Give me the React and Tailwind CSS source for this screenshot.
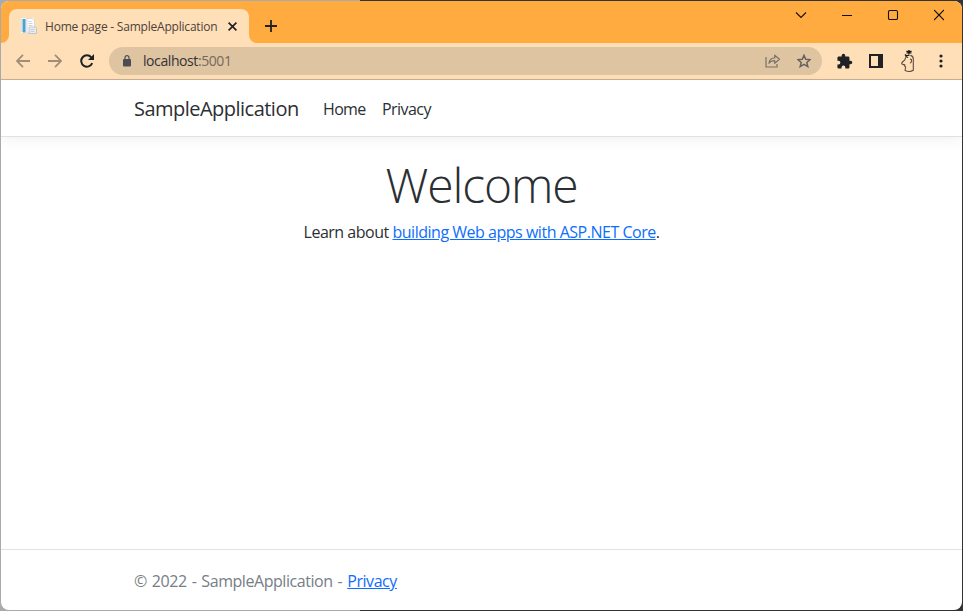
import React from "react";

function Tab() {
  return (
    <div className="relative mt-[8px] ml-[8px] flex h-[34px] w-[240px] items-center rounded-t-[8px] bg-[#ffdfb8] pl-3">
      <svg className="absolute bottom-0 -left-[8px]" width="8" height="8" viewBox="0 0 8 8" fill="#ffdfb8">
        <path d="M8 0V8H0A8 8 0 0 0 8 0Z" />
      </svg>
      <svg className="absolute -right-[8px] bottom-0" width="8" height="8" viewBox="0 0 8 8" fill="#ffdfb8">
        <path d="M0 0V8H8A8 8 0 0 1 0 0Z" />
      </svg>
      <svg width="16" height="16" viewBox="0 0 16 16" className="shrink-0">
        <rect x="0" y="0" width="13" height="15" fill="#f1f5f7" />
        <rect x="0.5" y="1" width="1.5" height="13" fill="#a5d3ec" />
        <rect x="2" y="1" width="2.5" height="13.5" fill="#4d9fce" />
        <path d="M6 .5h5l2.500 2.500V15H6z" fill="#fff" stroke="#c9d0d8" strokeWidth=".7" />
        <path d="M8 9h6.500l1 1.500V15.500H8z" fill="#e9edf1" stroke="#aeb8c2" strokeWidth=".7" />
        <path d="M7.500 3.500h3M7.500 5.500h4M7.500 7.500h4M9.500 11.500h4M9.500 13.500h4" stroke="#bcc6d0" strokeWidth=".8" />
      </svg>
      <span className="ml-2 w-[180px] pt-[2px] text-[12px] leading-4 tracking-[-0.21px] whitespace-nowrap text-[#4d4238]">
        Home page - SampleApplication
      </span>
      <svg className="absolute top-[13px] right-[12px]" width="9" height="9" viewBox="0 0 9 9" stroke="#202124" strokeWidth="1.7">
        <path d="M.6.6l7.800 7.800M8.400.6L.6 8.400" />
      </svg>
    </div>
  );
}

function TitleBar() {
  return (
    <div className="flex h-[42px] bg-[#ffab40]">
      <Tab />
      <svg className="mt-[19px] ml-[16px]" width="12" height="12" viewBox="0 0 12 12" stroke="#202124" strokeWidth="1.800">
        <path d="M6 0v12M0 6h12" />
      </svg>
      <div className="mt-[8px] mr-[18px] ml-auto flex h-[12px] items-center gap-[35px]">
        <svg width="12" height="12" viewBox="0 0 12 12" fill="none" stroke="#111" strokeWidth="1.100">
          <path d="M1 3.500l5 5 5-5" />
        </svg>
        <svg width="10" height="12" viewBox="0 0 10 12" stroke="#111" strokeWidth="1">
          <path d="M0 6.500h10" />
        </svg>
        <svg width="12" height="12" viewBox="0 0 12 12" fill="none" stroke="#111" strokeWidth="1.100">
          <rect x="1.500" y="1.500" width="9" height="9" rx="1.300" />
        </svg>
        <svg width="10" height="12" viewBox="0 0 10 12" stroke="#111" strokeWidth="1.100">
          <path d="M0 1l10 10M10 1L0 11" />
        </svg>
      </div>
    </div>
  );
}

function ToolBar() {
  return (
    <div className="flex h-[37px] items-center border-b border-[#c9b091] bg-[#ffdfb8] pl-[15px]">
      <svg width="14" height="14" viewBox="0 0 14 14" fill="none" stroke="#a28e78" strokeWidth="1.800">
        <path d="M14 7H1.300M7 .8L.9 7 7 13.200" />
      </svg>
      <svg className="ml-[18px]" width="14" height="14" viewBox="0 0 14 14" fill="none" stroke="#a28e78" strokeWidth="1.800">
        <path d="M0 7h12.700M7 .8L13.100 7 7 13.200" />
      </svg>
      <svg className="ml-[18px]" width="14" height="14" viewBox="0 0 14 14">
        <path d="M12.200 9.200A5.700 5.700 0 1 1 11.300 3.300" fill="none" stroke="#202124" strokeWidth="2" />
        <path d="M14 0v6H8z" fill="#202124" />
      </svg>
      <div className="ml-[15px] flex h-7 w-[713px] items-center rounded-full bg-[#dfc4a2] pl-[14px]">
        <svg width="8" height="12" viewBox="0 0 8 12">
          <path d="M2 5V2.700a2 2 0 0 1 4 0V5" fill="none" stroke="#4b4d52" strokeWidth="1.200" />
          <rect y="4" width="8" height="7.500" rx="1" fill="#4b4d52" />
        </svg>
        <span className="ml-3 text-[14px] leading-5 tracking-[-0.42px] text-[#323234]">
          localhost<span className="text-[#75695e]">:5001</span>
        </span>
        <svg className="ml-auto" width="16" height="14" viewBox="0 0 16 14" fill="none" stroke="#77716a" strokeWidth="1.200">
          <path d="M1 3v10h11v-3" />
          <path d="M4 9.300C4.300 6 6.500 4 9.700 4V1.200L14.500 5.300 9.700 9.300V6.600C7 6.600 5.200 7.400 4 9.300z" strokeLinejoin="round" />
        </svg>
        <svg className="mr-[11px] ml-[16px]" width="14" height="14" viewBox="0 0 14 14" fill="none" stroke="#66625f" strokeWidth="1.500">
          <path d="M7 1.300l1.700 3.900 4.300.4-3.200 2.800 1 4.200L7 10.400l-3.800 2.200 1-4.200L1 5.600l4.300-.4z" />
        </svg>
      </div>
      <svg className="ml-[13.5px]" width="17" height="17" viewBox="0 0 24 24" fill="#202124">
        <path d="M20.500 11H19V7c0-1.100-.9-2-2-2h-4V3.500a2.500 2.500 0 0 0-5 0V5H4c-1.100 0-2 .9-2 2v3.800h1.500a2.700 2.700 0 0 1 0 5.400H2V20c0 1.100.9 2 2 2h3.800v-1.500a2.700 2.700 0 0 1 5.400 0V22H17c1.100 0 2-.9 2-2v-4h1.500a2.500 2.500 0 0 0 0-5z" />
      </svg>
      <svg className="ml-[16.5px]" width="15" height="14" viewBox="0 0 15 14">
        <path d="M1 1h12v12H1z" fill="none" stroke="#202124" strokeWidth="2" />
        <path d="M9 0h5v14H9z" fill="#202124" />
      </svg>
      <svg className="ml-[17px]" width="15" height="22" viewBox="0 0 15 22" fill="none" stroke="#5c4c3c" strokeWidth="1.100">
        <path d="M5.500 6.500C4.500 7.500 4 9 3.800 10L1 12.500c-.8 1 .2 2.200 2.700 2.200-.4 1 .2 1.800.9 2.200l-.5 3.500c2.500 1.200 6 1.200 8.200-.2V9c0-2-1.200-3.300-3-3.600" />
        <path d="M9 9.500c1-.8 1.800 0 1.500 1.300-.1 1.200-.7 2.300-1.500 2" />
        <path d="M5.500 1.200l5 2M5.500 3.200l5-2M4.500 6.300l4-1.500M4 4.500l3 3M8 0v4" stroke="#171717" strokeWidth="1.400" />
      </svg>
      <svg className="ml-[22.5px]" width="4" height="14" viewBox="0 0 4 14" fill="#202124">
        <circle cx="2" cy="2" r="1.600" />
        <circle cx="2" cy="7" r="1.600" />
        <circle cx="2" cy="12" r="1.600" />
      </svg>
    </div>
  );
}

export default function App() {
  return (
    <div className="h-[611px] w-[963px] bg-[linear-gradient(90deg,#aaa_360px,#333_360px)] p-px font-['Open_Sans','Noto_Sans',sans-serif]">
      <div className="flex h-[609px] w-[961px] flex-col overflow-hidden rounded-[8px] bg-white text-[#2b2f33]">
        <TitleBar />
        <ToolBar />
        <header className="flex h-[57px] shrink-0 items-center border-b border-[#dee2e6] pt-[2px] pl-[133px] shadow-[0_4px_12px_rgba(0,0,0,0.05)]">
          <span className="w-[165px] text-[20px] leading-[30px] tracking-[-0.52px] whitespace-nowrap">SampleApplication</span>
          <nav className="ml-6 flex gap-4 text-[16px] leading-6">
            <a className="w-[43px] tracking-[-0.65px]">Home</a>
            <a className="tracking-[-0.55px]">Privacy</a>
          </nav>
        </header>
        <main className="flex-1 pt-[19px] text-center">
          <h1 className="text-[48px] leading-[58px] font-light tracking-[-1.1px]">Welcome</h1>
          <p className="mt-[6px] text-[16px] leading-6 tracking-[-0.48px]">
            Learn about <a className="text-[#0d6efd] underline">building Web apps with ASP.NET Core</a>.
          </p>
        </main>
        <footer className="h-[61px] border-t border-[#dee2e6] pt-[19px] pl-[133px] text-[16px] leading-6 tracking-[-0.45px] [word-spacing:1.3px] text-[#767e86]">
          © 2022 - SampleApplication - <a className="text-[#0d6efd] underline">Privacy</a>
        </footer>
      </div>
    </div>
  );
}
